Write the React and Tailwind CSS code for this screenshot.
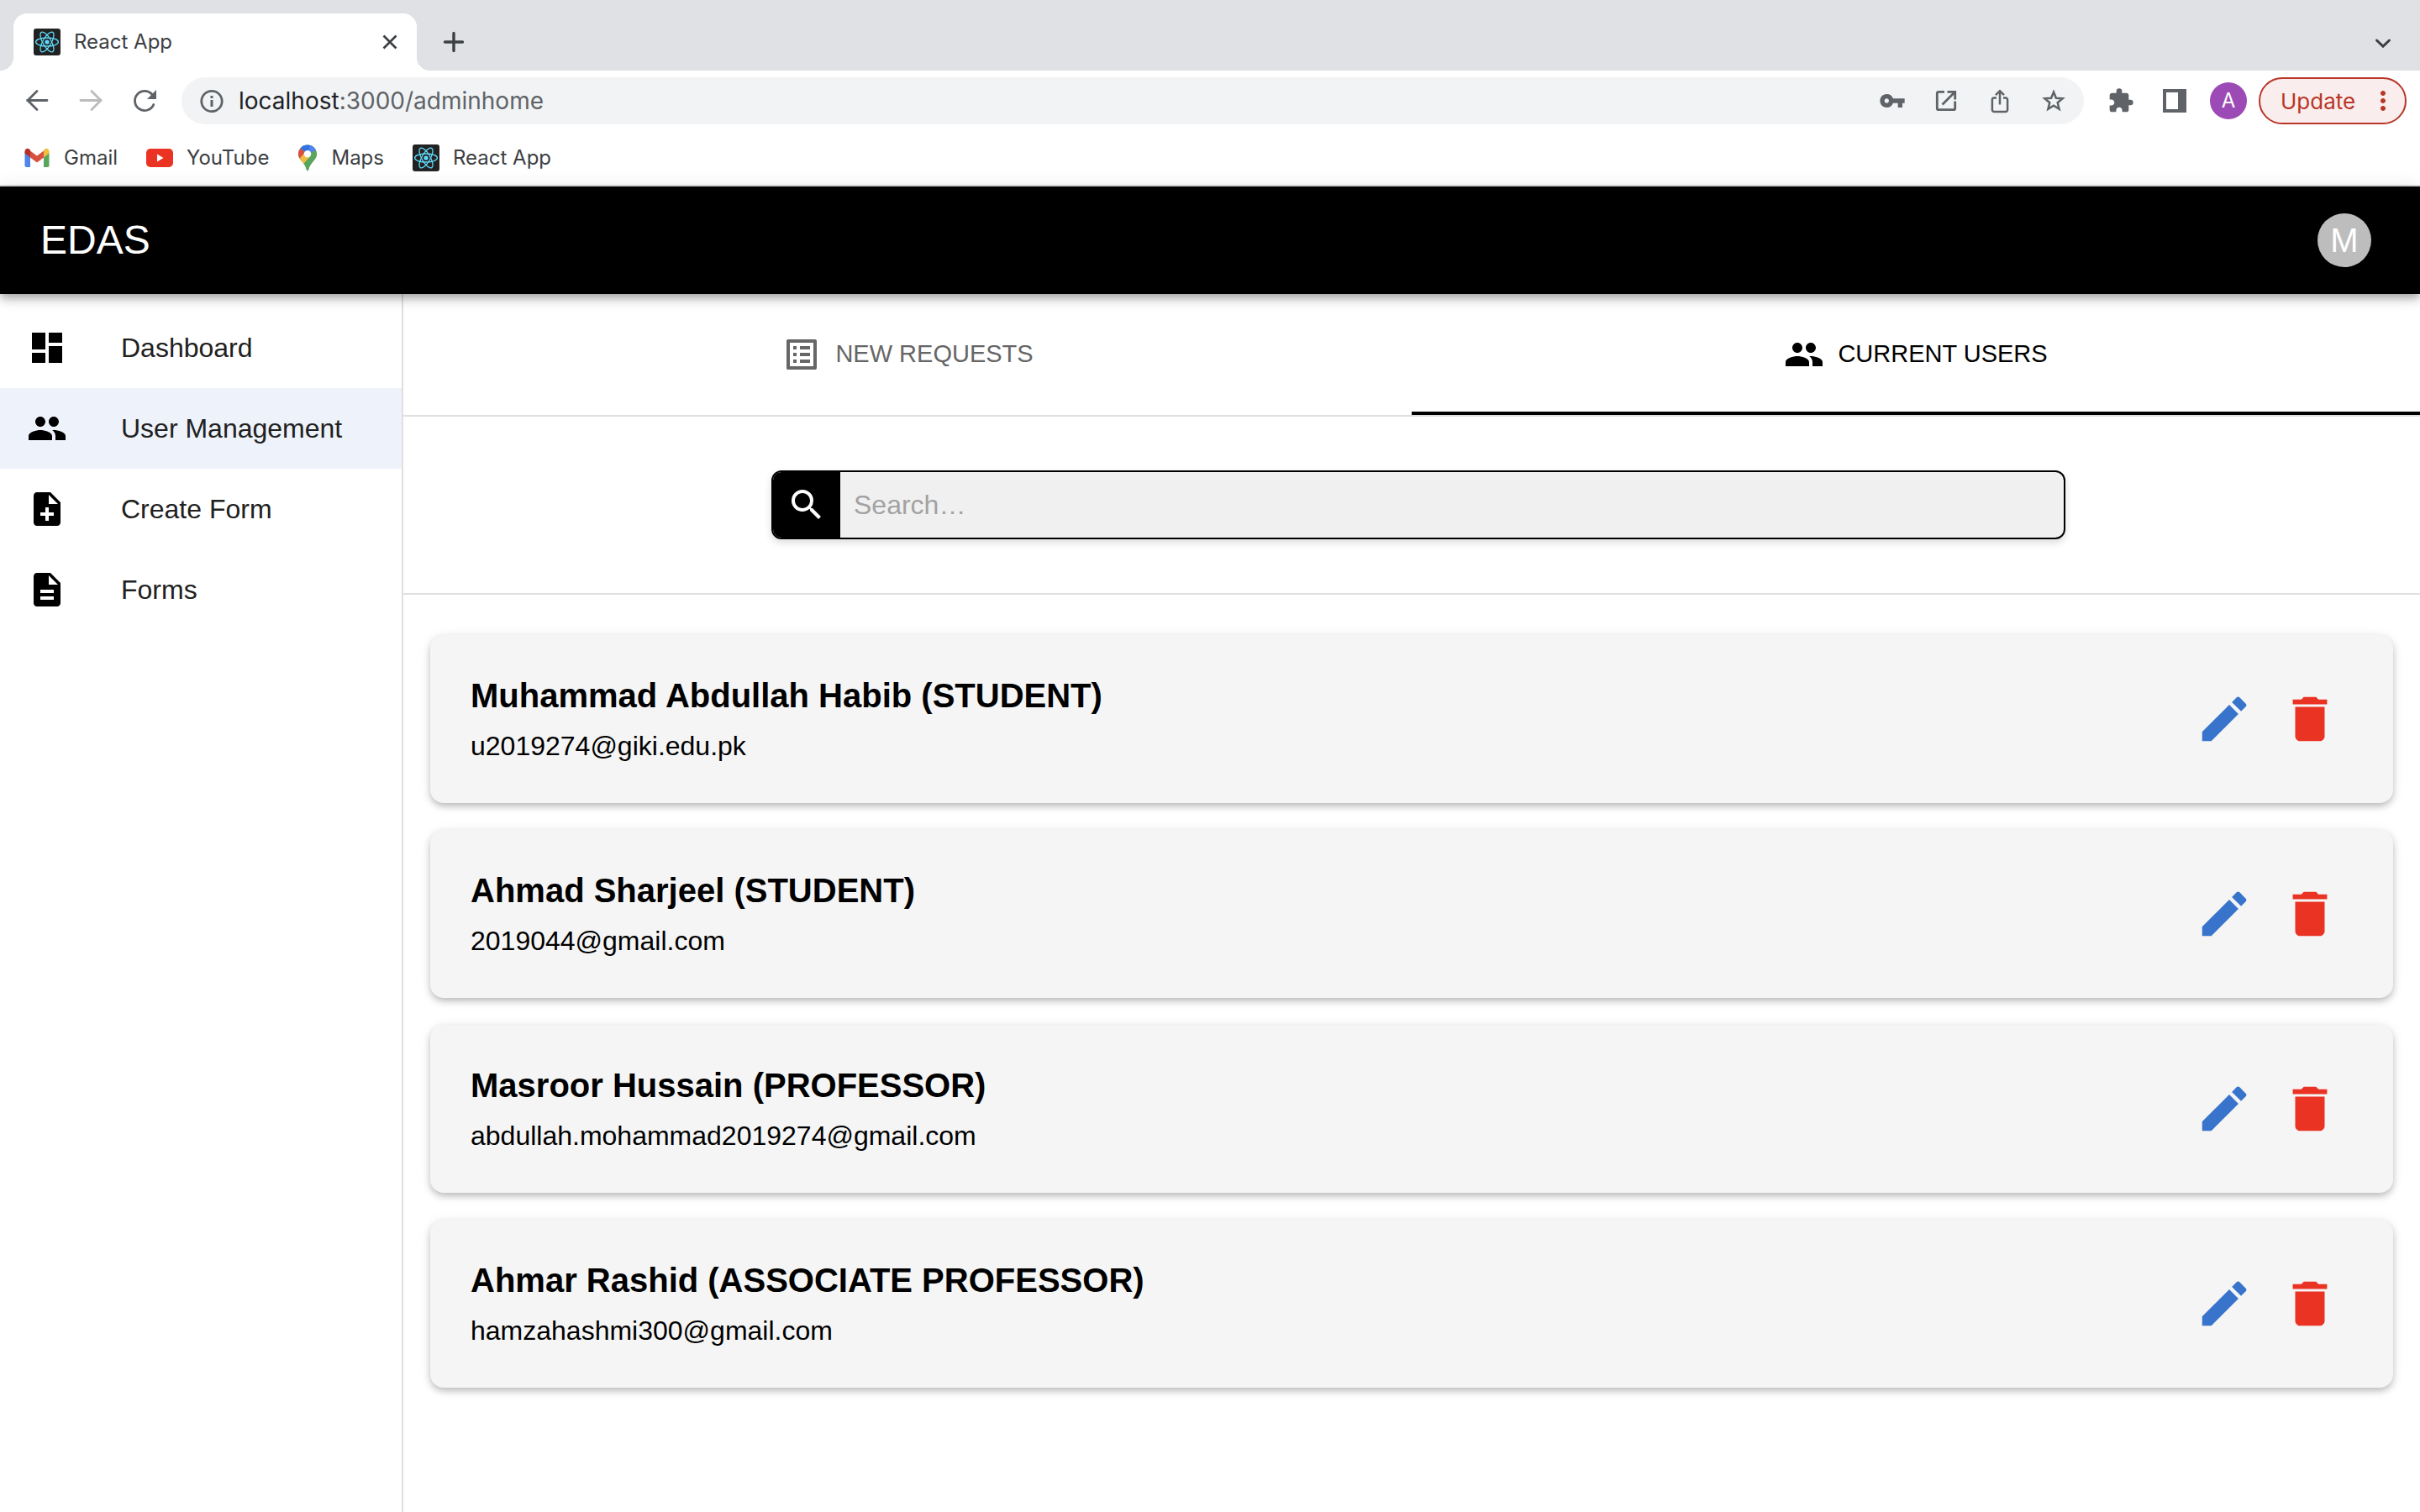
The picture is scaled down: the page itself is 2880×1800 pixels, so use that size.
import { MdDashboard, MdPeople, MdNoteAdd, MdDescription, MdListAlt, MdSearch, MdEdit, MdDelete, MdVpnKey, MdExtension, MdMoreVert } from "react-icons/md";

function Svg({ size, children, ...rest }) {
  return (
    <svg width={size} height={size} viewBox="0 0 32 32" fill="none" aria-hidden="true" {...rest}>
      {children}
    </svg>
  );
}

function ReactLogo() {
  return (
    <Svg size={32}>
      <rect width="32" height="32" rx="3" fill="#222222" />
      <g stroke="#61dafb" strokeWidth="1.3">
        <ellipse cx="16" cy="16" rx="13.4" ry="5" />
        <ellipse cx="16" cy="16" rx="13.4" ry="5" transform="rotate(60 16 16)" />
        <ellipse cx="16" cy="16" rx="13.4" ry="5" transform="rotate(120 16 16)" />
      </g>
      <circle cx="16" cy="16" r="2.6" fill="#61dafb" />
    </Svg>
  );
}

function GmailLogo() {
  return (
    <Svg size={32}>
      <path d="M1.500 9v15.500a2 2 0 0 0 2 2.500H8V14.500z" fill="#4f86ec" />
      <path d="M30.500 9v15.500a2 2 0 0 1-2 2.500H24V14.500z" fill="#58a55c" />
      <path d="M8 15.500V7.500l8 6 8-6v8l-8 6z" fill="#d85140" />
      <path d="M1.500 10.600V8c0-2.800 3.200-4.200 5.300-2.600L8 6.500v9z" fill="#b33225" />
      <path d="M30.500 10.600V8c0-2.800-3.200-4.200-5.300-2.600L24 6.500v9z" fill="#f2be42" />
    </Svg>
  );
}

function YouTubeLogo() {
  return (
    <Svg size={32}>
      <rect x="0" y="5" width="32" height="22" rx="5" fill="#ea3323" />
      <path d="M13 11.500v9l7.500-4.500z" fill="#fff" />
    </Svg>
  );
}

function MapsLogo() {
  return (
    <svg width="24" height="32" viewBox="0 0 24 32" aria-hidden="true">
      <clipPath id="pin">
        <path d="M12 .5C5.600.5 1 5.300 1 11.300c0 3.500 1.700 5.700 4 8.400 3 3.600 4.700 5.800 6 10.700.3 1.400 1.700 1.400 2 0 1.300-4.900 3-7.100 6-10.700 2.300-2.700 4-4.900 4-8.400C23 5.300 18.400.5 12 .5z" />
      </clipPath>
      <g clipPath="url(#pin)">
        <rect width="24" height="32" fill="#58a55c" />
        <path d="M3.500 4.500 12 11.300 2.500 22-2 12z" fill="#d85140" />
        <path d="M2 17.200 12 6l4.500 8L5 27z" fill="#f2be42" />
        <path d="M3.500 4.500 8-1h8l-1 7-3 5.300z" fill="#3372e0" />
        <path d="M15.500 0 24 2l-2 5-10 4.300z" fill="#5383ec" />
        <path d="M22 6.500 4.500 26 14 32l12-8z" fill="#58a55c" />
      </g>
      <circle cx="12" cy="11.300" r="4.200" fill="#fff" />
    </svg>
  );
}

function Bookmark({ icon, label }) {
  return (
    <a href="#" className="flex items-center gap-4 whitespace-nowrap">
      {icon}
      {label}
    </a>
  );
}

const stroke = { stroke: "currentColor", strokeWidth: 2.8 };

function TabStrip() {
  return (
    <div className="flex h-[84px] items-end justify-between bg-[#dfe1e5] pr-8 text-[#3c4043]">
      <div className="flex items-end">
        <div className="size-4 bg-[radial-gradient(circle_at_0_0,#dfe1e5_16px,white_16px)]" />
        <div className="flex h-[68px] w-[480px] items-center rounded-t-2xl bg-white pr-5 pl-6">
          <ReactLogo />
          <span className="ml-4 flex-1 text-2xl">React App</span>
          <button type="button" aria-label="Close tab" className="size-6">
            <Svg size={24}>
              <path d="M6 6 26 26M26 6 6 26" stroke="currentColor" strokeWidth="3.600" />
            </Svg>
          </button>
        </div>
        <div className="size-4 bg-[radial-gradient(circle_at_100%_0,#dfe1e5_16px,white_16px)]" />
        <button type="button" aria-label="New tab" className="mb-[18px] ml-3 size-8">
          <Svg size={32}>
            <path d="M16 5.500v21M5.500 16h21" stroke="currentColor" strokeWidth="3.400" strokeLinecap="round" />
          </Svg>
        </button>
      </div>
      <button type="button" aria-label="Search tabs" className="mb-[21px] size-6">
        <Svg size={24}>
          <path d="M6 12 16 21.500 26 12" stroke="currentColor" strokeWidth="4" strokeLinecap="round" />
        </Svg>
      </button>
    </div>
  );
}

function Toolbar() {
  return (
    <div className="flex h-[72px] items-center bg-white pr-4 pl-7 text-[#5f6368]">
      <div className="flex items-center gap-8">
        <button type="button" aria-label="Back">
          <Svg size={32}><path d="M28 15.500H4.500M16 4.500l-11 11 11 11" {...stroke} strokeLinecap="round" /></Svg>
        </button>
        <button type="button" aria-label="Forward" className="text-[#babcbe]">
          <Svg size={32}><path d="M4 15.500h23.500M17 4.500l11 11-11 11" {...stroke} strokeLinecap="round" /></Svg>
        </button>
        <button type="button" aria-label="Reload">
          <Svg size={32}>
            <path d="M26.800 20.500A11.600 11.600 0 1 1 25 8.500" {...stroke} strokeLinecap="round" />
            <path d="M30 3v11H19z" fill="currentColor" />
          </Svg>
        </button>
      </div>
      <div className="ml-7 flex h-14 flex-1 items-center rounded-full bg-[#f1f3f4] pr-5 pl-5">
        <Svg size={32}>
          <circle cx="16" cy="16.500" r="12.200" {...stroke} />
          <path d="M16 15v8M16 10v3" stroke="currentColor" strokeWidth="3" />
        </Svg>
        <div className="ml-4 flex-1 text-[28px]">
          <span className="text-[#202124]">localhost</span>:3000/adminhome
        </div>
        <div className="flex items-center gap-8">
          <button type="button" aria-label="Passwords"><MdVpnKey size={32} /></button>
          <button type="button" aria-label="Open in app">
            <Svg size={32}><path d="M14 5.300H7a1.700 1.700 0 0 0-1.700 1.700v18A1.700 1.700 0 0 0 7 26.700h18a1.700 1.700 0 0 0 1.700-1.700v-8.500M17.500 5.300h9.200v9.200M26.500 5.500 11.500 20.500" {...stroke} /></Svg>
          </button>
          <button type="button" aria-label="Share">
            <Svg size={32}><path d="M12 12.500H9.200a2.300 2.300 0 0 0-2.300 2.300v12a2.300 2.300 0 0 0 2.300 2.300h13.600a2.300 2.300 0 0 0 2.300-2.300v-12a2.300 2.300 0 0 0-2.300-2.300H20M16 20.500V4.500M11 9.200l5-5 5 5" {...stroke} strokeWidth="2.500" /></Svg>
          </button>
          <button type="button" aria-label="Bookmark">
            <Svg size={32}><path d="m16 5.500 2.900 7.200 7.700.6-5.900 4.900 1.900 7.500-6.600-4.100-6.600 4.100 1.900-7.500-5.900-4.900 7.700-.6z" {...stroke} strokeWidth="2.500" strokeMiterlimit="10" /></Svg>
          </button>
        </div>
      </div>
      <div className="ml-7 flex items-center">
        <button type="button" aria-label="Extensions"><MdExtension size={32} /></button>
        <button type="button" aria-label="Side panel" className="ml-8">
          <Svg size={32}><path fillRule="evenodd" fill="currentColor" d="M2 2h28v28H2zM6 6v20h14V6z" /></Svg>
        </button>
        <button type="button" className="ml-[26px] size-11 rounded-full bg-[#9c4ab5] text-2xl text-white">A</button>
        <button type="button" className="ml-3.5 flex h-14 w-44 items-center justify-between rounded-full border-2 border-[#b93528] bg-[#f9eeed] pr-2 pl-6 text-[26px] text-[#b93528]">
          Update
          <MdMoreVert size={36} />
        </button>
      </div>
    </div>
  );
}

const navItems = [
  { label: "Dashboard", Icon: MdDashboard },
  { label: "User Management", Icon: MdPeople, active: true },
  { label: "Create Form", Icon: MdNoteAdd },
  { label: "Forms", Icon: MdDescription },
];

const users = [
  { name: "Muhammad Abdullah Habib (STUDENT)", email: "u2019274@giki.edu.pk" },
  { name: "Ahmad Sharjeel (STUDENT)", email: "2019044@gmail.com" },
  { name: "Masroor Hussain (PROFESSOR)", email: "abdullah.mohammad2019274@gmail.com" },
  { name: "Ahmar Rashid (ASSOCIATE PROFESSOR)", email: "hamzahashmi300@gmail.com" },
];

function UserCard({ name, email }) {
  return (
    <li className="flex items-center justify-between rounded-2xl bg-[#f5f5f5] px-12 py-11 text-black shadow-[0_4px_8px_-2px_rgba(0,0,0,0.16),0_4px_10px_0_rgba(0,0,0,0.12),0_2px_16px_0_rgba(0,0,0,0.07)]">
      <div>
        <h2 className="mb-2 text-[40px] leading-14 font-bold">{name}</h2>
        <p className="text-[32px] leading-12">{email}</p>
      </div>
      <div className="flex">
        <button type="button" aria-label={`Edit ${name}`} className="p-4 text-[#3874cb]"><MdEdit size={70} /></button>
        <button type="button" aria-label={`Delete ${name}`} className="p-4 text-[#ea3323]"><MdDelete size={70} /></button>
      </div>
    </li>
  );
}

export default function App() {
  return (
    <div className="flex min-h-screen flex-col bg-white font-['Liberation_Sans',Arial,sans-serif]">
      <div className="font-['Inter',sans-serif]">
        <TabStrip />
        <Toolbar />
        <nav aria-label="Bookmarks" className="flex h-[66px] items-center gap-[34px] border-b-2 border-[#d9dbde] bg-white px-7 text-2xl text-[#3c4043]">
          <Bookmark icon={<GmailLogo />} label="Gmail" />
          <Bookmark icon={<YouTubeLogo />} label="YouTube" />
          <Bookmark icon={<MapsLogo />} label="Maps" />
          <Bookmark icon={<ReactLogo />} label="React App" />
        </nav>
      </div>

      <header className="z-10 flex h-32 items-center justify-between bg-black pr-[58px] pl-12 text-white shadow-[0_4px_8px_-2px_rgba(0,0,0,0.2),0_8px_10px_0_rgba(0,0,0,0.14),0_2px_20px_0_rgba(0,0,0,0.12)]">
        <h1 className="text-5xl">EDAS</h1>
        <button type="button" className="size-16 rounded-full bg-[#bdbdbd] text-[40px] leading-16">M</button>
      </header>

      <div className="flex flex-1">
        <nav aria-label="Main" className="w-[480px] shrink-0 border-r-2 border-[#e0e0e0] py-4">
          {navItems.map(({ label, Icon, active }) => (
            <a key={label} href="#" className={`flex h-24 items-center gap-16 px-8 text-[32px] text-[#212121] ${active ? "bg-[#eef2fa]" : ""}`}>
              <Icon size={48} className="text-black" />
              {label}
            </a>
          ))}
        </nav>

        <main className="min-w-0 flex-1">
          <div role="tablist" className="grid grid-cols-2 border-b-2 border-[#e0e0e0] text-[29px]">
            <button type="button" role="tab" aria-selected="false" className="flex h-36 items-center justify-center gap-4 text-[#666666]">
              <MdListAlt size={48} />
              NEW REQUESTS
            </button>
            <button type="button" role="tab" aria-selected="true" className="flex h-36 items-center justify-center gap-4 border-b-4 border-black pt-1 text-black">
              <MdPeople size={48} />
              CURRENT USERS
            </button>
          </div>

          <div className="flex justify-center border-b-2 border-[#e0e0e0] py-16 pl-4">
            <label className="flex h-[82px] w-full max-w-[1540px] overflow-hidden rounded-xl border-2 border-black bg-[#f0f0f0] shadow-[0_4px_10px_rgba(0,0,0,0.14)]">
              <span className="flex w-20 items-center justify-center bg-black text-white">
                <MdSearch size={48} />
              </span>
              <input type="text" placeholder="Search…" aria-label="Search" className="min-w-0 flex-1 px-4 text-[32px] outline-none placeholder:text-[#a2a2a2]" />
            </label>
          </div>

          <ul className="flex flex-col gap-8 px-8 py-12">
            {users.map((user) => (
              <UserCard key={user.email} {...user} />
            ))}
          </ul>
        </main>
      </div>
    </div>
  );
}
